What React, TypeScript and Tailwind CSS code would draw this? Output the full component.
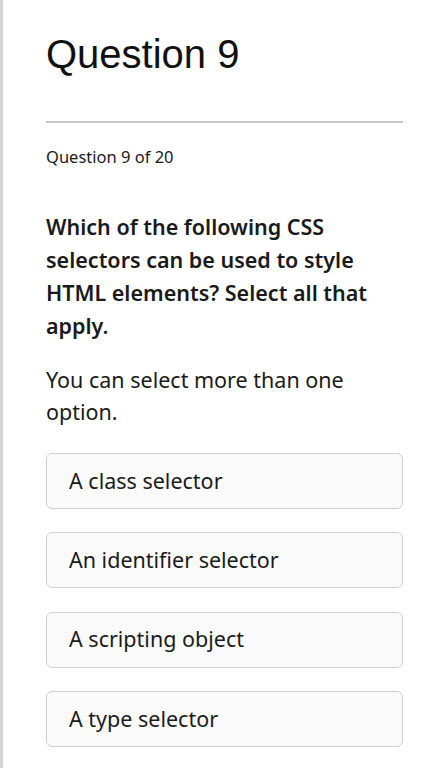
const options = [
  "A class selector",
  "An identifier selector",
  "A scripting object",
  "A type selector",
];

export default function App() {
  return (
    <div className="min-h-screen bg-white border-l-[3px] border-[#d4d4d4] pl-[43px] pr-[42px] font-['Noto_Sans',sans-serif] text-[#1a1a1a]">
      <h1 className="pt-[30px] text-[40px] leading-[48px] font-['Liberation_Sans',sans-serif] text-[#111]">
        Question 9
      </h1>
      <hr className="mt-[43px] border-t-2 border-[#c8c8c8]" />
      <p className="mt-[22px] text-[16.5px] leading-[24px]">Question 9 of 20</p>
      <h2 className="mt-[41px] text-[21.5px] leading-[33px] font-semibold">
        Which of the following CSS selectors can be used to style HTML elements? Select all that apply.
      </h2>
      <p className="mt-[22px] text-[21.5px] leading-[32px]">You can select more than one option.</p>
      <div className="mt-[25px] flex flex-col gap-[23.3px]">
        {options.map((o) => (
          <button
            key={o}
            className="h-[56px] w-full rounded-[6px] border border-[#d0d0d0] bg-[#fafafa] px-[22px] text-left text-[21.5px]"
          >
            {o}
          </button>
        ))}
      </div>
    </div>
  );
}
